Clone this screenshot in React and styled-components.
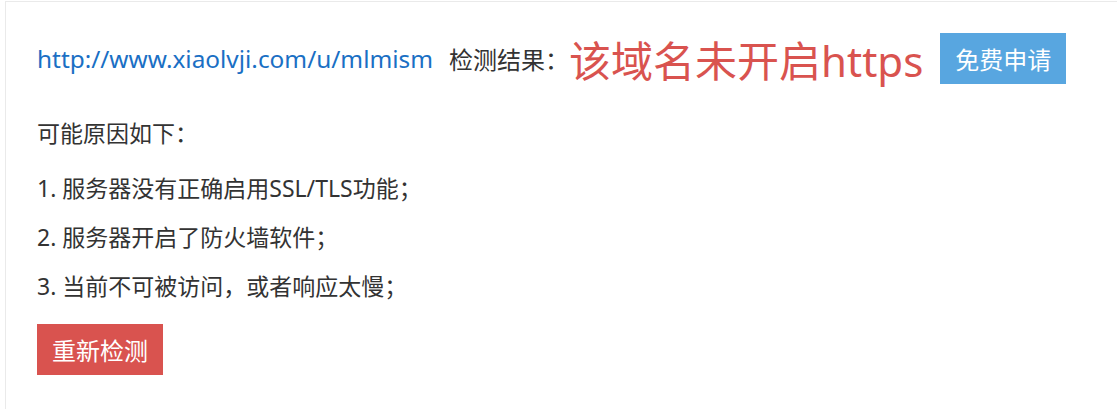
import React from "react";
import styled, { createGlobalStyle } from "styled-components";

const GlobalStyle = createGlobalStyle`
  html, body {
    margin: 0;
    padding: 0;
    background: #fff;
  }
  body {
    font-family: "Noto Sans", "Noto Sans CJK SC", sans-serif;
    color: #333;
  }
`;

const reasons = [
  "服务器没有正确启用SSL/TLS功能；",
  "服务器开启了防火墙软件；",
  "当前不可被访问，或者响应太慢；",
];

const App = () => {
  return (
    <>
      <GlobalStyle />
      <Panel>
        <ResultRow>
          <UrlLink href="#">http://www.xiaolvji.com/u/mlmism</UrlLink>
          <Label>检测结果：</Label>
          <Status>该域名未开启https</Status>
          <Button $color="#58a6e0">免费申请</Button>
        </ResultRow>
        <Reason>可能原因如下：</Reason>
        <ReasonList>
          {reasons.map((r, i) => (
            <ReasonItem key={i}>
              {i + 1}. {r}
            </ReasonItem>
          ))}
        </ReasonList>
        <Button $color="#d9534f">重新检测</Button>
      </Panel>
    </>
  );
};

const Panel = styled.div`
  margin: 1px 0 0 5px;
  border: 1px solid #eaeaea;
  border-right: none;
  border-bottom: none;
  padding: 31px 31px 40px;
  min-height: 409px;
  box-sizing: border-box;
`;
const ResultRow = styled.div`
  display: flex;
  align-items: center;
  height: 51px;
`;
const UrlLink = styled.a`
  color: #1a6fc4;
  font-size: 24.4px;
  text-decoration: none;
  margin-right: 16px;
`;
const Label = styled.span`
  font-size: 24px;
  color: #333;
`;
const Status = styled.span`
  font-size: 42px;
  color: #d9534f;
  margin-right: 17px;
`;
const Button = styled.button`
  background: ${(p) => p.$color};
  color: #fff;
  border: none;
  font-family: inherit;
  font-size: 24px;
  height: 51px;
  padding: 0 15px;
  cursor: pointer;
`;
const Reason = styled.p`
  margin: 34px 0 0;
  font-size: 23px;
  line-height: 30px;
`;
const ReasonList = styled.div`
  margin: 16px 0 13px;
`;
const ReasonItem = styled.p`
  margin: 0;
  font-size: 23px;
  line-height: 49px;
`;

export default App;
